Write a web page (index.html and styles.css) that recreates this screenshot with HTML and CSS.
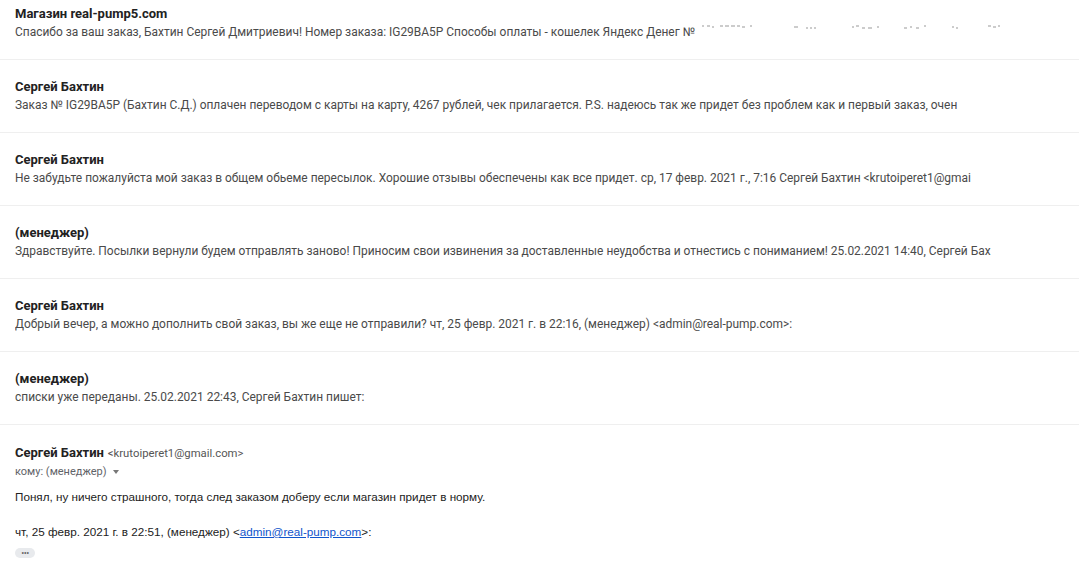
FILE: index.html
```html
<!DOCTYPE html>
<html lang="ru">
<head>
  <meta charset="UTF-8">
  <meta name="viewport" content="width=device-width, initial-scale=1.0">
  <title>Переписка</title>
  <link rel="stylesheet" href="styles.css">
</head>
<body>
  <div class="thread">
    <div class="msg">
      <div class="sender">Магазин real-pump5.com</div>
      <div class="snippet">Спасибо за ваш заказ, Бахтин Сергей Дмитриевич! Номер заказа: IG29BA5P Способы оплаты - кошелек Яндекс Денег № <svg class="smudge" width="310" height="5" viewBox="0 0 310 5">
          <!-- tops of the hidden account number -->
          <path d="M4 1h2M9 1h3M14 2h2M22 1h3M27 1h4M33 1h4M39 1h3M44 2h3M52 1h2" />
          <path d="M96 2h4M108 3h2M112 3h2M116 3h2M154 2h2M158 1h3M164 3h3M170 3h4M179 2h2M206 3h3M212 2h2M218 3h3M226 1h2M254 2h2M258 3h2M290 1h3M295 2h3M300 1h2" />
        </svg></div>
    </div>
    <div class="msg">
      <div class="sender">Сергей Бахтин</div>
      <div class="snippet">Заказ № IG29BA5P (Бахтин С.Д.) оплачен переводом с карты на карту, 4267 рублей, чек прилагается. P.S. надеюсь так же придет без проблем как и первый заказ, очен</div>
    </div>
    <div class="msg">
      <div class="sender">Сергей Бахтин</div>
      <div class="snippet">Не забудьте пожалуйста мой заказ в общем обьеме пересылок. Хорошие отзывы обеспечены как все придет. ср, 17 февр. 2021 г., 7:16 Сергей Бахтин &lt;krutoiperet1@gmai</div>
    </div>
    <div class="msg">
      <div class="sender">(менеджер)</div>
      <div class="snippet">Здравствуйте. Посылки вернули будем отправлять заново! Приносим свои извинения за доставленные неудобства и отнестись с пониманием! 25.02.2021 14:40, Сергей Бах</div>
    </div>
    <div class="msg">
      <div class="sender">Сергей Бахтин</div>
      <div class="snippet">Добрый вечер, а можно дополнить свой заказ, вы же еще не отправили? чт, 25 февр. 2021 г. в 22:16, (менеджер) &lt;admin@real-pump.com&gt;:</div>
    </div>
    <div class="msg">
      <div class="sender">(менеджер)</div>
      <div class="snippet">списки уже переданы. 25.02.2021 22:43, Сергей Бахтин пишет:</div>
    </div>
    <div class="msg open">
      <div class="head">
        <span class="sender">Сергей Бахтин</span>
        <span class="email">&lt;krutoiperet1@gmail.com&gt;</span>
      </div>
      <div class="to">кому: (менеджер) <span class="caret"></span></div>
      <div class="body">
        <p>Понял, ну ничего страшного, тогда след заказом доберу если магазин придет в норму.</p>
        <p class="quote">чт, 25 февр. 2021 г. в 22:51, (менеджер) &lt;<a href="#">admin@real-pump.com</a>&gt;:</p>
      </div>
      <div class="dots">•••</div>
    </div>
  </div>
</body>
</html>
```

FILE: styles.css
```css
body {
  margin: 0;
  background: #fff;
  color: #222;
  font-family: Roboto, 'Liberation Sans', sans-serif;
  overflow: hidden;
}
.thread {
  margin-top: -13px;
}
.msg {
  padding: 18px 15px;
  border-bottom: 1px solid #efefef;
}
.sender {
  font-size: 13px;
  font-weight: bold;
  line-height: 18px;
  color: #222;
}
.snippet {
  font-size: 11.95px;
  line-height: 18px;
  color: #4a4a4a;
  white-space: nowrap;
  overflow: hidden;
}
.smudge {
  vertical-align: 6px;
}
.smudge path {
  stroke: #999;
  stroke-width: 1;
  fill: none;
}
.open {
  border-bottom: none;
  padding-bottom: 0;
}
.head {
  line-height: 18px;
}
.email {
  font-size: 11.3px;
  color: #555;
}
.to {
  font-size: 11px;
  color: #5f6368;
  line-height: 18px;
}
.caret {
  display: inline-block;
  margin-left: 4px;
  border-left: 3px solid transparent;
  border-right: 3px solid transparent;
  border-top: 4px solid #777;
  vertical-align: middle;
}
.body {
  font-family: 'Liberation Sans', Arial, sans-serif;
  font-size: 11.7px;
  color: #222;
  margin-top: 7px;
}
.body p {
  margin: 0 0 18px;
  line-height: 17px;
}
.body .quote {
  margin-bottom: 8px;
}
.body a {
  color: #15c;
}
.dots {
  width: 20px;
  height: 10px;
  background: #e8eaed;
  border-radius: 5px;
  font-size: 9px;
  line-height: 10px;
  letter-spacing: -0.5px;
  text-align: center;
  color: #666;
}
```
